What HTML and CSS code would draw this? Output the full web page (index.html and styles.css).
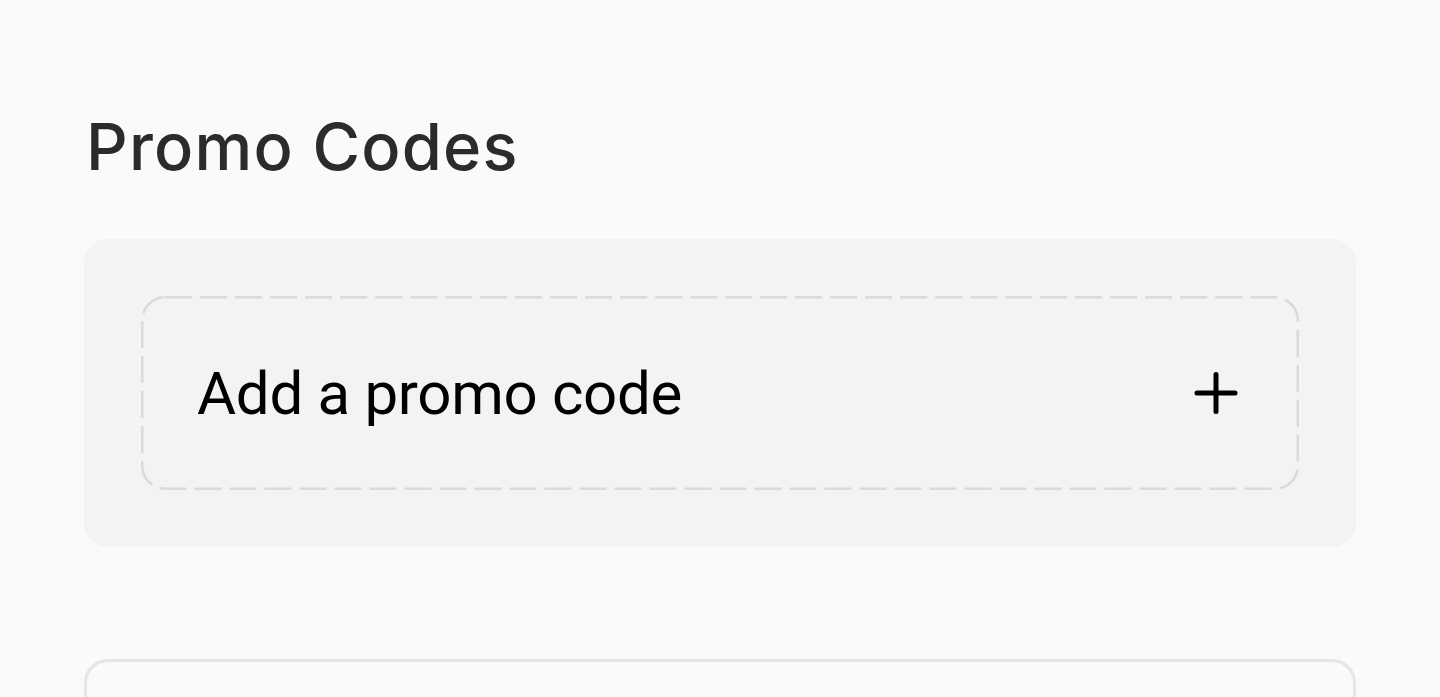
FILE: index.html
```html
<!DOCTYPE html>
<html lang="en">
<head>
<meta charset="utf-8">
<title>Promo Codes</title>
<link rel="stylesheet" href="styles.css">
</head>
<body>
<main class="page">
  <h1 class="title">Promo Codes</h1>
  <section class="promo-card">
    <button class="add-promo" type="button">
      <svg class="dash" width="1158" height="194" viewBox="0 0 1158 194" aria-hidden="true">
        <rect x="1.25" y="1.25" width="1155.5" height="191.5" rx="23" ry="23" fill="none" stroke="#dadada" stroke-width="2.5" stroke-dasharray="27 8"/>
      </svg>
      <span class="add-label">Add a promo code</span>
      <svg class="plus" width="44" height="44" viewBox="0 0 44 44" aria-hidden="true">
        <path d="M22 3.5V40.5M3 22H41" stroke="#000" stroke-width="5" stroke-linecap="round" fill="none"/>
      </svg>
    </button>
  </section>
  <section class="next-card"></section>
</main>
</body>
</html>
```
FILE: styles.css
```css
html, body {
  margin: 0;
  padding: 0;
  background: #fafafa;
  height: 100%;
  overflow: hidden;
}
.page {
  padding: 0 84px;
  display: flex;
  flex-direction: column;
}
.title {
  margin: 108px 0 0 2px;
  font-family: "Inter", "Lato", sans-serif;
  font-weight: 500;
  font-size: 65px;
  line-height: 78px;
  color: #2b2b2b;
  letter-spacing: 1.2px;
}
.promo-card {
  margin-top: 53px;
  background: #f3f3f3;
  border-radius: 24px;
  padding: 57px;
}
.add-promo {
  position: relative;
  width: 100%;
  height: 194px;
  box-sizing: border-box;
  display: flex;
  align-items: center;
  justify-content: space-between;
  padding: 0 61px 0 56px;
  background: transparent;
  border: 0;
  border-radius: 24px;
  cursor: pointer;
}
.dash {
  position: absolute;
  left: 0;
  top: 0;
}
.add-label {
  font-family: "Roboto", sans-serif;
  font-size: 60px;
  font-weight: 400;
  color: #000;
  letter-spacing: -0.3px;
}
.plus {
  display: block;
}
.next-card {
  margin-top: 112px;
  height: 200px;
  border: 3px solid #e5e5e5;
  border-radius: 24px;
  background: #fafafa;
}
```
